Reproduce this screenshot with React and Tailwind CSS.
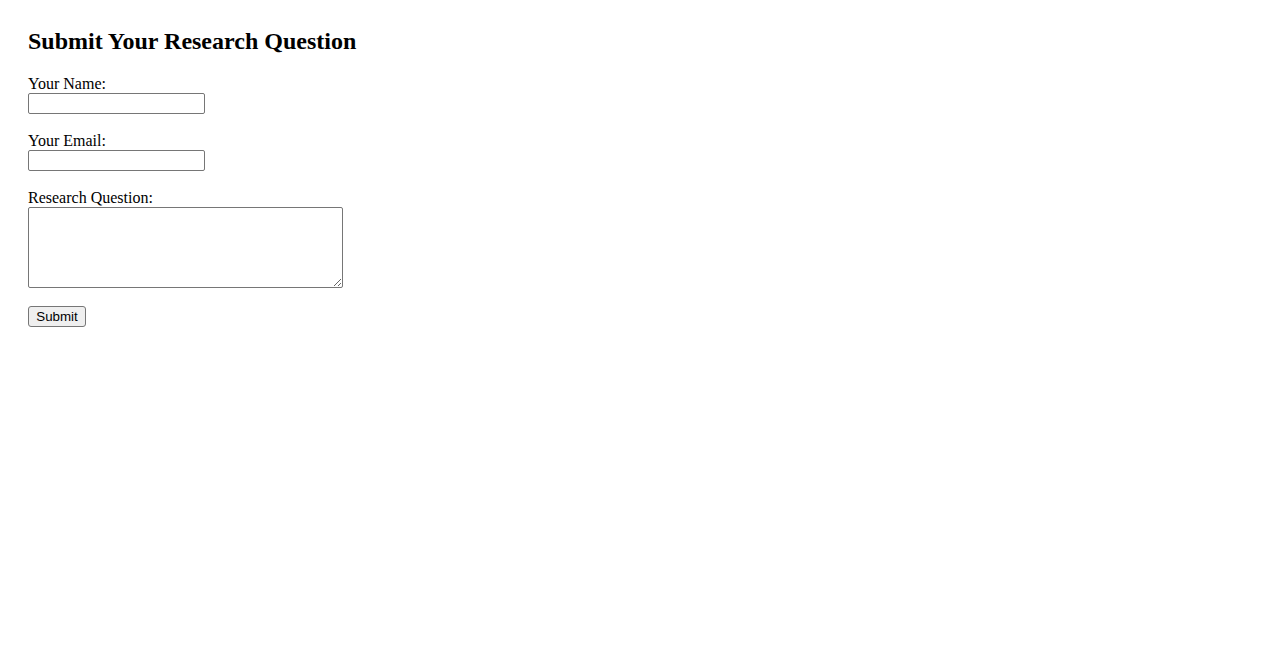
export default function App() {
  const inputCls =
    "block w-[177px] h-[21px] border border-[#767676] rounded-[2px] bg-white px-[2px] text-[13px] outline-none";
  return (
    <div className="min-h-[650px] bg-white pt-[28px] pl-[28px] text-black font-['Liberation_Serif','Times_New_Roman',serif]">
      <h2 className="text-[24px] font-bold leading-[27px] mb-[20px]">Submit Your Research Question</h2>
      <form className="flex flex-col items-start" onSubmit={(e) => e.preventDefault()}>
        <label className="text-[16px] leading-[18px]">Your Name:</label>
        <input type="text" className={inputCls} />
        <label className="text-[16px] leading-[18px] mt-[18px]">Your Email:</label>
        <input type="email" className={inputCls} />
        <label className="text-[16px] leading-[18px] mt-[18px]">Research Question:</label>
        <textarea className="block w-[315px] h-[81px] border border-[#767676] rounded-[2px] bg-white p-[2px] text-[13px] outline-none resize" />
        <button
          type="submit"
          className="mt-[18px] w-[58px] h-[21px] bg-[#efefef] border border-[#767676] rounded-[3px] text-[13.33px] leading-none font-['Liberation_Sans',Arial,sans-serif] text-black"
        >
          Submit
        </button>
      </form>
    </div>
  );
}
